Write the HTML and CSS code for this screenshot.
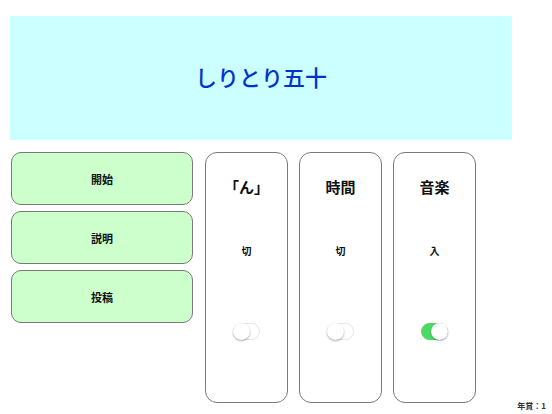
FILE: index.html
```html
<!DOCTYPE html>
<html lang="ja">
<head>
<meta charset="utf-8">
<title>しりとり五十</title>
<link rel="stylesheet" href="styles.css">
</head>
<body>
<header class="banner"><h1 class="title">しりとり五十</h1></header>
<main class="row">
  <nav class="menu">
    <button class="menu-btn">開始</button>
    <button class="menu-btn">説明</button>
    <button class="menu-btn">投稿</button>
  </nav>
  <section class="cards">
    <div class="card">
      <div class="card-title">「ん」</div>
      <div class="card-state">切</div>
      <span class="toggle"><span class="knob"></span></span>
    </div>
    <div class="card">
      <div class="card-title">時間</div>
      <div class="card-state">切</div>
      <span class="toggle"><span class="knob"></span></span>
    </div>
    <div class="card">
      <div class="card-title">音楽</div>
      <div class="card-state">入</div>
      <span class="toggle on"><span class="knob"></span></span>
    </div>
  </section>
</main>
<footer class="footer-note">年賞：1</footer>
</body>
</html>
```

FILE: styles.css
```css
html, body {
  margin: 0;
  padding: 0;
  background: #ffffff;
  font-family: "Noto Sans CJK JP", "Liberation Serif", serif;
  color: #111;
}
.banner {
  margin: 16px 40px 0 10px;
  height: 124px;
  background: #ccffff;
  display: flex;
  align-items: center;
  justify-content: center;
}
.title {
  margin: 0 0 4px 0;
  font-size: 22px;
  font-weight: 500;
  color: #0433cc;
  letter-spacing: 0;
}
.row {
  display: flex;
  margin: 12px 0 0 11px;
  height: 251px;
}
.menu {
  display: flex;
  flex-direction: column;
  gap: 6px;
  width: 182px;
}
.menu-btn {
  height: 53px;
  background: #ccffcc;
  border: 1px solid #7a7a7a;
  border-radius: 10px;
  font-family: inherit;
  font-size: 11px;
  font-weight: 700;
  color: #111;
  padding: 0;
  box-sizing: border-box;
}
.cards {
  display: flex;
  gap: 11px;
  margin-left: 12px;
}
.card {
  width: 83px;
  height: 251px;
  box-sizing: border-box;
  border: 1px solid #7a7a7a;
  border-radius: 12px;
  display: flex;
  flex-direction: column;
  align-items: center;
}
.card-title {
  margin-top: 23px;
  font-size: 15px;
  font-weight: 700;
  line-height: 22px;
}
.card-state {
  margin-top: 46px;
  font-size: 10px;
  font-weight: 700;
  line-height: 14px;
}
.toggle {
  margin-top: 65px;
  width: 27px;
  height: 17px;
  border-radius: 9px;
  background: #ffffff;
  border: 1px solid #e4e4e4;
  box-sizing: border-box;
  position: relative;
  display: block;
}
.toggle .knob {
  position: absolute;
  top: -1px;
  left: -1px;
  width: 17px;
  height: 17px;
  border-radius: 50%;
  background: #fff;
  box-shadow: 0 1px 2px rgba(0,0,0,0.35);
}
.toggle.on {
  background: #4cd964;
  border-color: #4cd964;
}
.toggle.on .knob {
  left: 9px;
}
.footer-note {
  display: block;
  margin-top: -2px;
  padding-right: 6px;
  text-align: right;
  font-size: 8px;
  line-height: 10px;
  font-weight: 700;
  color: #333;
  white-space: nowrap;
}
```
